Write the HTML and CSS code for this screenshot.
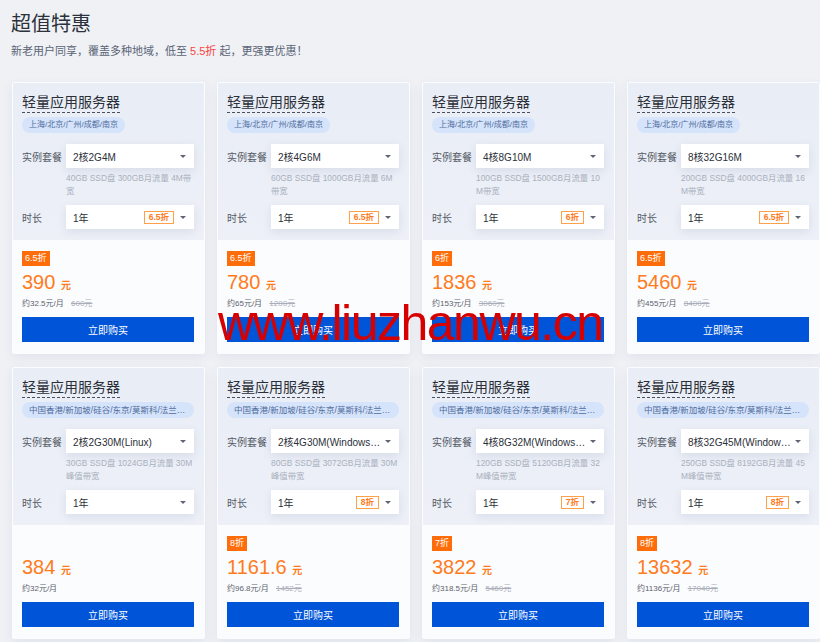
FILE: index.html
```html
<!DOCTYPE html>
<html lang="zh-CN">
<head>
    <meta charset="UTF-8">
    <meta name="viewport" content="width=device-width, initial-scale=1.0">
    <title>超值特惠</title>
    <link rel="stylesheet" href="styles.css">
</head>
<body>
    <header class="head">
        <h1>超值特惠</h1>
        <p>新老用户同享，覆盖多种地域，低至 <em>5.5折</em> 起，更强更优惠！</p>
    </header>

    <main class="grid">
        <!-- 国内地域 -->
        <div class="card">
            <div class="card-top">
                <h3 class="card-title"><span>轻量应用服务器</span></h3>
                <div class="region">上海/北京/广州/成都/南京</div>
                <div class="field"><span class="field-label">实例套餐</span><div class="select"><span class="select-value">2核2G4M</span><i class="caret"></i></div></div>
                <p class="spec">40GB SSD盘 300GB月流量 4M带宽</p>
                <div class="field"><span class="field-label">时长</span><div class="select"><span class="select-value">1年</span><span class="off">6.5折</span><i class="caret"></i></div></div>
            </div>
            <div class="card-bottom">
                <span class="badge">6.5折</span>
                <div class="price">390 <small>元</small></div>
                <div class="monthly">约32.5元/月 <del>600元</del></div>
                <button class="buy">立即购买</button>
            </div>
        </div>

        <div class="card">
            <div class="card-top">
                <h3 class="card-title"><span>轻量应用服务器</span></h3>
                <div class="region">上海/北京/广州/成都/南京</div>
                <div class="field"><span class="field-label">实例套餐</span><div class="select"><span class="select-value">2核4G6M</span><i class="caret"></i></div></div>
                <p class="spec">60GB SSD盘 1000GB月流量 6M带宽</p>
                <div class="field"><span class="field-label">时长</span><div class="select"><span class="select-value">1年</span><span class="off">6.5折</span><i class="caret"></i></div></div>
            </div>
            <div class="card-bottom">
                <span class="badge">6.5折</span>
                <div class="price">780 <small>元</small></div>
                <div class="monthly">约65元/月 <del>1200元</del></div>
                <button class="buy">立即购买</button>
            </div>
        </div>

        <div class="card">
            <div class="card-top">
                <h3 class="card-title"><span>轻量应用服务器</span></h3>
                <div class="region">上海/北京/广州/成都/南京</div>
                <div class="field"><span class="field-label">实例套餐</span><div class="select"><span class="select-value">4核8G10M</span><i class="caret"></i></div></div>
                <p class="spec">100GB SSD盘 1500GB月流量 10M带宽</p>
                <div class="field"><span class="field-label">时长</span><div class="select"><span class="select-value">1年</span><span class="off">6折</span><i class="caret"></i></div></div>
            </div>
            <div class="card-bottom">
                <span class="badge">6折</span>
                <div class="price">1836 <small>元</small></div>
                <div class="monthly">约153元/月 <del>3060元</del></div>
                <button class="buy">立即购买</button>
            </div>
        </div>

        <div class="card">
            <div class="card-top">
                <h3 class="card-title"><span>轻量应用服务器</span></h3>
                <div class="region">上海/北京/广州/成都/南京</div>
                <div class="field"><span class="field-label">实例套餐</span><div class="select"><span class="select-value">8核32G16M</span><i class="caret"></i></div></div>
                <p class="spec">200GB SSD盘 4000GB月流量 16M带宽</p>
                <div class="field"><span class="field-label">时长</span><div class="select"><span class="select-value">1年</span><span class="off">6.5折</span><i class="caret"></i></div></div>
            </div>
            <div class="card-bottom">
                <span class="badge">6.5折</span>
                <div class="price">5460 <small>元</small></div>
                <div class="monthly">约455元/月 <del>8400元</del></div>
                <button class="buy">立即购买</button>
            </div>
        </div>

        <!-- 海外地域 -->
        <div class="card">
            <div class="card-top">
                <h3 class="card-title"><span>轻量应用服务器</span></h3>
                <div class="region wide">中国香港/新加坡/硅谷/东京/莫斯科/法兰克福</div>
                <div class="field"><span class="field-label">实例套餐</span><div class="select"><span class="select-value">2核2G30M(Linux)</span><i class="caret"></i></div></div>
                <p class="spec">30GB SSD盘 1024GB月流量 30M峰值带宽</p>
                <div class="field"><span class="field-label">时长</span><div class="select"><span class="select-value">1年</span><i class="caret"></i></div></div>
            </div>
            <div class="card-bottom">
                <span class="badge hidden">无</span>
                <div class="price">384 <small>元</small></div>
                <div class="monthly">约32元/月</div>
                <button class="buy">立即购买</button>
            </div>
        </div>

        <div class="card">
            <div class="card-top">
                <h3 class="card-title"><span>轻量应用服务器</span></h3>
                <div class="region wide">中国香港/新加坡/硅谷/东京/莫斯科/法兰克福</div>
                <div class="field"><span class="field-label">实例套餐</span><div class="select"><span class="select-value">2核4G30M(Windows/Linux)</span><i class="caret"></i></div></div>
                <p class="spec">80GB SSD盘 3072GB月流量 30M峰值带宽</p>
                <div class="field"><span class="field-label">时长</span><div class="select"><span class="select-value">1年</span><span class="off">8折</span><i class="caret"></i></div></div>
            </div>
            <div class="card-bottom">
                <span class="badge">8折</span>
                <div class="price">1161.6 <small>元</small></div>
                <div class="monthly">约96.8元/月 <del>1452元</del></div>
                <button class="buy">立即购买</button>
            </div>
        </div>

        <div class="card">
            <div class="card-top">
                <h3 class="card-title"><span>轻量应用服务器</span></h3>
                <div class="region wide">中国香港/新加坡/硅谷/东京/莫斯科/法兰克福</div>
                <div class="field"><span class="field-label">实例套餐</span><div class="select"><span class="select-value">4核8G32M(Windows/Linux)</span><i class="caret"></i></div></div>
                <p class="spec">120GB SSD盘 5120GB月流量 32M峰值带宽</p>
                <div class="field"><span class="field-label">时长</span><div class="select"><span class="select-value">1年</span><span class="off">7折</span><i class="caret"></i></div></div>
            </div>
            <div class="card-bottom">
                <span class="badge">7折</span>
                <div class="price">3822 <small>元</small></div>
                <div class="monthly">约318.5元/月 <del>5460元</del></div>
                <button class="buy">立即购买</button>
            </div>
        </div>

        <div class="card">
            <div class="card-top">
                <h3 class="card-title"><span>轻量应用服务器</span></h3>
                <div class="region wide">中国香港/新加坡/硅谷/东京/莫斯科/法兰克福</div>
                <div class="field"><span class="field-label">实例套餐</span><div class="select"><span class="select-value">8核32G45M(Windows/Linux)</span><i class="caret"></i></div></div>
                <p class="spec">250GB SSD盘 8192GB月流量 45M峰值带宽</p>
                <div class="field"><span class="field-label">时长</span><div class="select"><span class="select-value">1年</span><span class="off">8折</span><i class="caret"></i></div></div>
            </div>
            <div class="card-bottom">
                <span class="badge">8折</span>
                <div class="price">13632 <small>元</small></div>
                <div class="monthly">约1136元/月 <del>17040元</del></div>
                <button class="buy">立即购买</button>
            </div>
        </div>
    </main>

    <div class="watermark">www.liuzhanwu.cn</div>
</body>
</html>
```

FILE: styles.css
```css
html {
    overflow: hidden;
}
body {
    font-family: 'Liberation Sans', 'Noto Sans CJK SC', sans-serif;
    margin: 0;
    padding: 0;
    background-color: #eff1f5;
    color: #333;
    position: relative;
    width: 820px;
    height: 642px;
}
.head {
    padding: 10px 11px 0;
}
.head h1 {
    margin: 0;
    font-size: 20px;
    line-height: 28px;
    font-weight: normal;
    color: #2c313b;
}
.head p {
    margin: 5px 0 0;
    font-size: 11px;
    line-height: 16px;
    color: #5b6476;
}
.head em {
    font-style: normal;
    color: #f5463f;
}
.grid {
    display: grid;
    grid-template-columns: repeat(4, 193px);
    column-gap: 12px;
    row-gap: 13px;
    padding-left: 12px;
    margin-top: 23px;
}
.card {
    border: 1px solid #fbfcfe;
    border-radius: 2px;
    background-color: #fbfcfe;
    box-shadow: 0 4px 12px rgba(60, 80, 130, 0.08);
    overflow: hidden;
}
.card-top {
    padding: 9px 10px 11px 9px;
    background: linear-gradient(180deg, #e9edf6 0%, #edf0f7 100%);
}
.card-title {
    margin: 0;
    height: 20px;
    font-size: 14px;
    line-height: 20px;
    font-weight: normal;
    color: #2b2f38;
}
.card-title span {
    display: inline-block;
    height: 20px;
    border-bottom: 1px dashed #4a4f5a;
}
.region {
    margin-top: 5px;
    width: fit-content;
    max-width: 100%;
    box-sizing: border-box;
    height: 16px;
    line-height: 16px;
    padding: 0 7px;
    border-radius: 8px;
    background-color: #d5e3fb;
    color: #4f6c9c;
    font-size: 8px;
    white-space: nowrap;
    overflow: hidden;
    text-overflow: ellipsis;
}
.region.wide {
    width: 100%;
    font-size: 8.5px;
    padding-right: 4px;
}
.field {
    display: flex;
    align-items: center;
    margin-top: 11px;
}
.spec + .field {
    margin-top: 0;
}
.field-label {
    width: 44px;
    flex: none;
    font-size: 10px;
    color: #555b66;
}
.select {
    flex: 1;
    min-width: 0;
    height: 24px;
    display: flex;
    align-items: center;
    padding: 0 8px 0 7px;
    background-color: #fff;
    box-shadow: 0 3px 10px rgba(70, 90, 140, 0.12);
    font-size: 10px;
    color: #2b2f38;
}
.select-value {
    flex: 1;
    min-width: 0;
    white-space: nowrap;
    overflow: hidden;
    text-overflow: ellipsis;
}
.off {
    flex: none;
    height: 11px;
    line-height: 11px;
    padding: 0 4px;
    margin: 0 2px 0 4px;
    border: 1px solid #ffa04a;
    color: #ff7a1a;
    font-size: 8.5px;
    font-weight: bold;
}
.caret {
    flex: none;
    width: 0;
    height: 0;
    margin-left: 4px;
    border-left: 3px solid transparent;
    border-right: 3px solid transparent;
    border-top: 3px solid #5f6570;
}
.spec {
    margin: 4px 0 7px 44px;
    height: 26px;
    font-size: 8.4px;
    line-height: 13px;
    color: #a9b0bd;
    word-break: break-all;
}
.card-bottom {
    padding: 11px 10px 11px 9px;
}
.badge {
    display: block;
    width: fit-content;
    height: 15px;
    line-height: 15px;
    padding: 0 3px;
    background-color: #ff6d0a;
    color: #fff;
    font-size: 9px;
}
.badge.hidden {
    visibility: hidden;
}
.price {
    margin-top: 4px;
    height: 24px;
    font-size: 20px;
    line-height: 24px;
    color: #ff7b1c;
}
.price small {
    font-size: 10px;
    line-height: 10px;
    font-weight: bold;
}
.monthly {
    margin-top: 4px;
    height: 12px;
    font-size: 8px;
    line-height: 12px;
    color: #5d626c;
}
.monthly del {
    margin-left: 5px;
    color: #a9aeb8;
}
.buy {
    display: block;
    width: 100%;
    height: 25px;
    margin-top: 7px;
    border: none;
    background-color: #0054d8;
    color: #fff;
    font-family: inherit;
    font-size: 10px;
    cursor: pointer;
}
.watermark {
    position: absolute;
    left: 218px;
    top: 298px;
    font-size: 50px;
    line-height: 50px;
    letter-spacing: -1.5px;
    color: #d60000;
    white-space: nowrap;
    pointer-events: none;
}
```
